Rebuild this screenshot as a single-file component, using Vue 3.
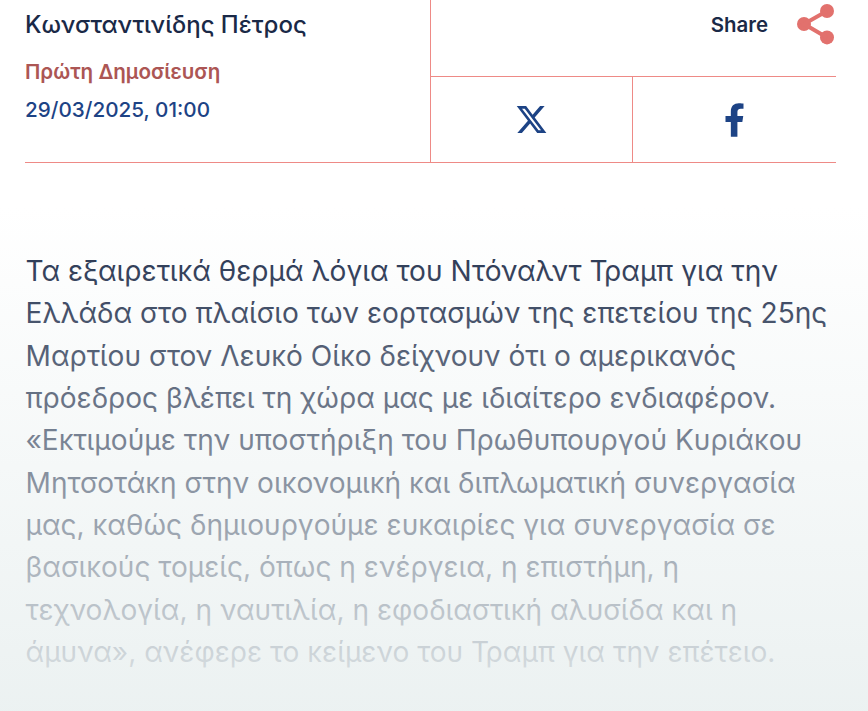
<script setup>
const lines = [
  'Τα εξαιρετικά θερμά λόγια του Ντόναλντ Τραμπ για την',
  'Ελλάδα στο πλαίσιο των εορτασμών της επετείου της 25ης',
  'Μαρτίου στον Λευκό Οίκο δείχνουν ότι ο αμερικανός',
  'πρόεδρος βλέπει τη χώρα μας με ιδιαίτερο ενδιαφέρον.',
  '«Εκτιμούμε την υποστήριξη του Πρωθυπουργού Κυριάκου',
  'Μητσοτάκη στην οικονομική και διπλωματική συνεργασία',
  'μας, καθώς δημιουργούμε ευκαιρίες για συνεργασία σε',
  'βασικούς τομείς, όπως η ενέργεια, η επιστήμη, η',
  'τεχνολογία, η ναυτιλία, η εφοδιαστική αλυσίδα και η',
  'άμυνα», ανέφερε το κείμενο του Τραμπ για την επέτειο.'
]
</script>

<template>
  <div class="page">
    <header class="head">
      <div class="meta">
        <div class="author">Κωνσταντινίδης Πέτρος</div>
        <div class="label">Πρώτη Δημοσίευση</div>
        <div class="date">29/03/2025, 01:00</div>
      </div>
      <div class="share">
        <div class="share-top">
          <span class="share-text">Share</span>
          <svg class="share-icon" width="38" height="42" viewBox="0 0 38 42">
            <g fill="#e2716d">
              <circle cx="30" cy="8" r="7"/>
              <circle cx="7" cy="21" r="7"/>
              <circle cx="30" cy="34.4" r="7"/>
            </g>
            <path d="M30 8L7 21L30 34.4" fill="none" stroke="#e2716d" stroke-width="4"/>
          </svg>
        </div>
        <div class="share-btns">
          <div class="btn">
            <svg class="x-icon" width="33" height="33" viewBox="0 0 24 24" fill="#1d4385">
              <path d="M18.244 2.25h3.308l-7.227 8.26 8.502 11.24H16.17l-5.214-6.817L4.99 21.75H1.68l7.73-8.835L1.254 2.25H8.08l4.713 6.231zm-1.161 17.52h1.833L7.084 4.126H5.117z"/>
            </svg>
          </div>
          <div class="btn btn-last">
            <svg width="21" height="34" viewBox="0 0 320 512" fill="#1d4385">
              <path d="M279.14 288l14.22-92.66h-88.91v-60.13c0-25.35 12.42-50.06 52.24-50.06h40.42V6.26S260.43 0 225.36 0c-73.22 0-121.08 44.38-121.08 124.72v70.62H22.89V288h81.39v224h100.17V288z"/>
            </svg>
          </div>
        </div>
      </div>
    </header>
    <div class="body">
      <div class="text">
        <div v-for="l in lines" :key="l" class="line">{{ l }}</div>
      </div>
      <div class="fade"></div>
    </div>
  </div>
</template>

<style>
html, body { margin: 0; background: #fff; }
</style>

<style scoped>
.page {
  width: 868px;
  height: 711px;
  overflow: hidden;
  font-family: Inter, "Liberation Sans", sans-serif;
  background: #fff;
  position: relative;
}
.head {
  display: flex;
  margin: 0 32px 0 25px;
  height: 163px;
  border-bottom: 1px solid #ee8a86;
  box-sizing: border-box;
}
.meta {
  width: 405px;
  box-sizing: border-box;
  padding-top: 11px;
}
.author { font-size: 24px; line-height: 28px; font-weight: 500; color: #1a2947; }
.label { margin-top: 19px; font-size: 20.6px; line-height: 28px; font-weight: 600; color: #ac5654; }
.date { margin-top: 10px; font-size: 20.7px; line-height: 28px; font-weight: 500; color: #1d4385; }
.share { flex: 1; border-left: 1px solid #ee8a86; display: flex; flex-direction: column; }
.share-top {
  height: 77px;
  box-sizing: border-box;
  border-bottom: 1px solid #ee8a86;
  display: flex;
  justify-content: flex-end;
  align-items: flex-start;
  gap: 29px;
}
.share-text { font-size: 20.4px; line-height: 28px; margin-top: 11px; font-weight: 600; color: #1a2947; }
.share-icon { flex: none; margin-top: 3px; margin-right: 1px; }
.share-btns { flex: 1; display: flex; }
.btn { width: 201px; display: flex; align-items: center; justify-content: center; border-right: 1px solid #ee8a86; }
.btn-last { flex: 1; border-right: 0; }
.x-icon { margin-right: 1px; }
.body { position: relative; height: 548px; }
.text { padding: 87px 25px 0 25.5px; }
.line { font-size: 28.1px; line-height: 42.33px; color: #1a2947; white-space: nowrap; }
.fade {
  position: absolute;
  inset: 0;
  background: linear-gradient(to bottom, rgba(255,255,255,0) 8%, rgba(235,241,241,0.97) 100%);
}
</style>
